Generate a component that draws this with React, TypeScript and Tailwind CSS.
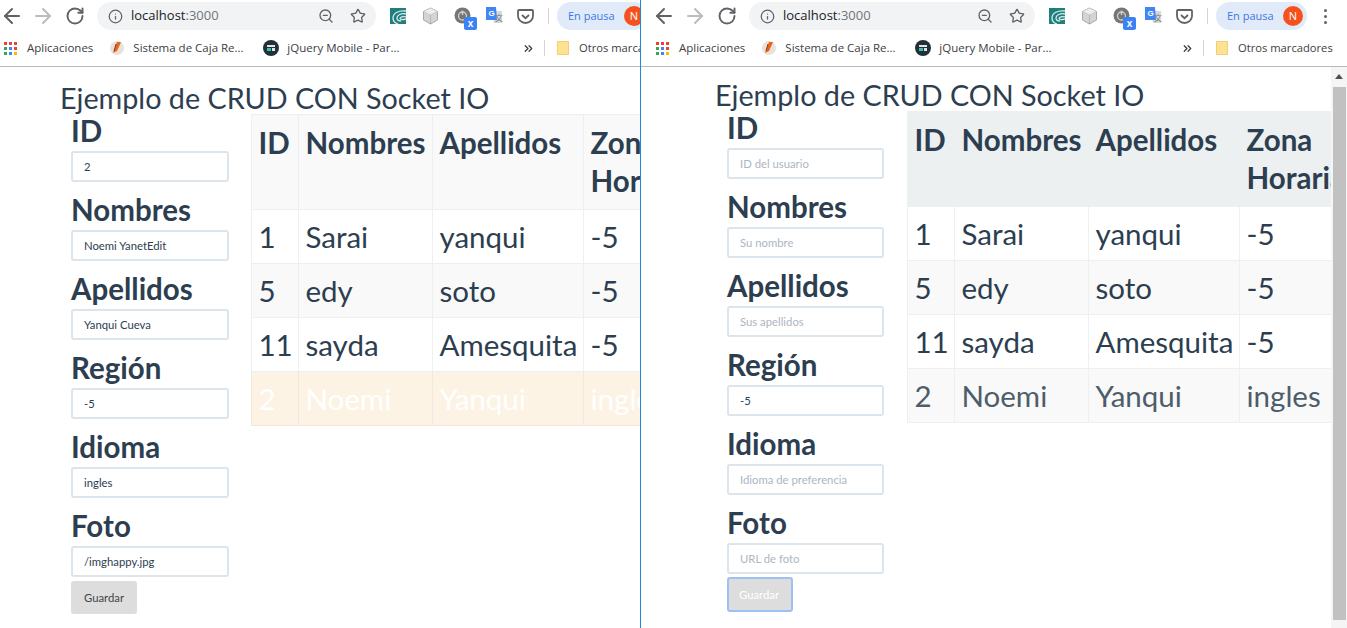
import { ArrowLeft, ArrowRight, ChevronsRight, Info, RotateCw, Star, ZoomOut } from "lucide-react";

const rows = [
  ["1", "Sarai", "yanqui", "-5"],
  ["5", "edy", "soto", "-5"],
  ["11", "sayda", "Amesquita", "-5"],
  ["2", "Noemi", "Yanqui", "ingles"],
];

const fields = [
  { label: "ID", value: "2", placeholder: "ID del usuario" },
  { label: "Nombres", value: "Noemi YanetEdit", placeholder: "Su nombre" },
  { label: "Apellidos", value: "Yanqui Cueva", placeholder: "Sus apellidos" },
  { label: "Región", value: "-5", placeholder: "-5" },
  { label: "Idioma", value: "ingles", placeholder: "Idioma de preferencia" },
  { label: "Foto", value: "/imghappy.jpg", placeholder: "URL de foto" },
];

function AppsGrid() {
  const colors = ["#ea4335", "#ea4335", "#ea4335", "#34a853", "#4285f4", "#ea4335", "#34a853", "#4285f4", "#fbbc05"];
  return (
    <div className="grid w-[13px] shrink-0 grid-cols-3 gap-[2px]">
      {colors.map((c, i) => (
        <svg key={i} width="3" height="3" className="block">
          <rect width="3" height="3" fill={c} />
        </svg>
      ))}
    </div>
  );
}

function Extensions() {
  return (
    <div className="flex shrink-0 items-center">
      {/* swirl */}
      <svg width="16" height="16" viewBox="0 0 16 16" className="ml-[14px]">
        <rect width="16" height="16" fill="#1f7f7c" />
        <path d="M16 3C9 2 3 5 3 10c0 3 2 5 5 6M16 6c-5-1-9 1-9 4 0 2 2 3 4 3M16 9c-3-1-6 0-6 1.500 0 1 2 1.500 6 .5" stroke="#d6ecec" strokeWidth="1.300" fill="none" />
      </svg>
      {/* cube */}
      <svg width="17" height="18" viewBox="0 0 17 18" className="ml-[16px]">
        <path d="M8.500 1 15.500 4.500V13L8.500 17 1.500 13V4.500Z" fill="#d4d4d4" stroke="#a8a8a8" />
        <path d="M1.500 4.500 8.500 8 15.500 4.500 8.500 1Z" fill="#ededed" stroke="#bdbdbd" strokeWidth="0.600" />
        <path d="M8.500 8V17" stroke="#b5b5b5" />
      </svg>
      {/* power badge */}
      <div className="relative ml-[15px] h-[18px] w-[18px]">
        <svg width="17" height="17" viewBox="0 0 17 17">
          <circle cx="8.500" cy="8.500" r="8" fill="#757575" />
          <circle cx="8.500" cy="9" r="4" fill="none" stroke="#d0d0d0" strokeWidth="1.300" />
          <path d="M8.500 3.500V8" stroke="#d0d0d0" strokeWidth="1.500" />
        </svg>
        <div className="absolute left-[10px] top-[10px] flex h-[13px] w-[13px] items-center justify-center rounded-[2px] bg-[#3b82f6] font-['Liberation_Sans',sans-serif] text-[10px] leading-none font-bold text-white">
          x
        </div>
      </div>
      {/* translate */}
      <svg width="17" height="18" viewBox="0 0 17 18" className="ml-[14px]">
        <path d="M6 4H16V16H8Z" fill="#d8d8d8" />
        <text x="9" y="14" fontSize="8" fontFamily="Liberation Sans, Noto Sans CJK SC, sans-serif" fill="#777777">文</text>
        <path d="M0 0H10L11 13H0Z" fill="#4285f4" />
        <text x="2.500" y="9" fontSize="8" fontWeight="700" fontFamily="Liberation Sans, sans-serif" fill="#ffffff">G</text>
      </svg>
      {/* pocket */}
      <svg width="17" height="15" viewBox="0 0 17 15" className="ml-[14px]">
        <path d="M2 1H15A1 1 0 0 1 16 2V7A7.500 7 0 0 1 1 7V2A1 1 0 0 1 2 1Z" fill="none" stroke="#5f6368" strokeWidth="1.800" />
        <path d="M5 6 8.500 9.200 12 6" fill="none" stroke="#5f6368" strokeWidth="1.800" />
      </svg>
    </div>
  );
}

function Toolbar({ className }: { className: string }) {
  return (
    <div className={`h-[67px] shrink-0 border-b border-[#b9b9b9] bg-white font-['Open_Sans',sans-serif] ${className}`}>
      <div className="flex h-[32px] items-center text-[#5f6368]">
        <ArrowLeft className="h-[24px] w-[24px] shrink-0" strokeWidth={2} />
        <ArrowRight className="ml-[7px] h-[24px] w-[24px] shrink-0 text-[#bcbcbc]" strokeWidth={2} />
        <RotateCw className="ml-[10px] h-[20px] w-[20px] shrink-0" strokeWidth={2.300} />
        <div className="ml-[12px] flex h-[28px] min-w-0 flex-1 items-center rounded-full bg-[#f1f3f4] pr-[10px] pl-[11px]">
          <Info className="h-[15px] w-[15px] shrink-0" strokeWidth={2} />
          <span className="ml-[8px] flex-1 text-[13px] text-[#202124]">
            localhost<span className="text-[#70757a]">:3000</span>
          </span>
          <ZoomOut className="h-[16px] w-[16px] shrink-0" strokeWidth={2} />
          <Star className="ml-[16px] h-[16px] w-[16px] shrink-0" strokeWidth={2} />
        </div>
        <Extensions />
        <div className="mr-[8px] ml-[14px] h-[16px] w-px shrink-0 bg-[#d5d5d5]" />
        <div className="flex h-[28px] w-[91px] shrink-0 items-center rounded-full bg-[#e0eaf8] pl-[11px]">
          <span className="w-[48px] shrink-0 text-[11px] whitespace-nowrap text-[#3b78e7]">En pausa</span>
          <div className="ml-[8px] flex h-[20px] w-[20px] shrink-0 items-center justify-center rounded-full bg-[#f4511e] text-[11px] text-white">N</div>
        </div>
        <div className="mr-[20px] ml-[17px] flex w-[3px] shrink-0 flex-col gap-[3px]">
          <div className="h-[3px] w-[3px] rounded-full bg-[#5f6368]" />
          <div className="h-[3px] w-[3px] rounded-full bg-[#5f6368]" />
          <div className="h-[3px] w-[3px] rounded-full bg-[#5f6368]" />
        </div>
      </div>
      <div className="flex h-[32px] items-center text-[11.500px] text-[#3c4043]">
        <div className="ml-[4px]"><AppsGrid /></div>
        <span className="ml-[10px]">Aplicaciones</span>
        <svg width="16" height="16" viewBox="0 0 16 16" className="ml-[16px] shrink-0">
          <circle cx="8" cy="8" r="7" fill="#e8e2da" />
          <path d="M4 13 8 2h4L8 11Z" fill="#e8641b" />
          <path d="M7 4 5 11" stroke="#8a3b10" />
        </svg>
        <span className="ml-[8px] w-[108px] shrink-0 whitespace-nowrap">Sistema de Caja Re...</span>
        <svg width="16" height="16" viewBox="0 0 16 16" className="ml-[22px] shrink-0">
          <circle cx="8" cy="8" r="8" fill="#22303a" />
          <rect x="4" y="5" width="8" height="2" fill="#dfe6e6" />
          <rect x="4" y="8" width="4" height="3" fill="#37c2a8" />
          <rect x="9" y="8" width="3" height="3" fill="#dfe6e6" />
        </svg>
        <span className="ml-[8px] w-[112px] shrink-0 whitespace-nowrap">jQuery Mobile - Par...</span>
        <div className="flex-1" />
        <ChevronsRight className="h-[13px] w-[13px] shrink-0" strokeWidth={2.400} />
        <div className="mr-[12px] ml-[9px] h-[16px] w-px shrink-0 bg-[#d5d5d5]" />
        <svg width="12" height="14" viewBox="0 0 12 14" className="shrink-0">
          <path d="M.5.500H11.500V13.500H.5Z" fill="#fde293" stroke="#f2cf6b" />
        </svg>
        <span className="ml-[10px] w-[109px] shrink-0 text-[11.200px] whitespace-nowrap">Otros marcadores</span>
      </div>
    </div>
  );
}

function Pane({ editing }: { editing: boolean }) {
  const cell = "border border-[#ecf0f1] px-[6.500px] align-top";
  return (
    <div className={`min-w-0 flex-1 overflow-hidden font-['Lato',sans-serif] text-[#2c3e50] ${editing ? "pt-[18px]" : "pt-[15px]"}`}>
      <h1 className={`text-[28.750px] leading-[26px] font-normal whitespace-nowrap ${editing ? "pl-[60px]" : "pl-[74px]"}`}>
        Ejemplo de CRUD CON Socket IO
      </h1>
      <div className={`flex ${editing ? "pl-[71px]" : "pl-[86px]"}`}>
        <form className={`flex shrink-0 flex-col gap-[8px] ${editing ? "w-[158px]" : "w-[157px]"}`}>
          {fields.map((f) => (
            <div key={f.label}>
              <div className="h-[40px] text-[29.500px] leading-[40px] font-bold whitespace-nowrap">{f.label}</div>
              <input
                readOnly
                value={editing ? f.value : f.label === "Región" ? "-5" : ""}
                placeholder={f.placeholder}
                className="block h-[31px] w-full rounded-[3px] border-2 border-[#dce4ec] bg-white px-[11px] pb-[1px] text-[11.300px] text-[#2c3e50] outline-none placeholder:text-[#acb6c0]"
              />
            </div>
          ))}
          {editing ? (
            <button type="button" className="-mt-[4px] h-[33px] w-[66px] rounded-[3px] bg-[#dddddd] pt-[1px] text-[11.300px] text-[#444444]">
              Guardar
            </button>
          ) : (
            <button type="button" className="-mt-[5px] h-[35px] w-[66px] rounded-[3px] border-2 border-[#9fbff5] bg-[#dddddd] pt-[1px] pr-[2px] text-[11.300px] text-white">
              Guardar
            </button>
          )}
        </form>
        <div className={`mt-[3px] min-w-0 flex-1 overflow-hidden ${editing ? "ml-[22px]" : "ml-[23px]"}`}>
          <table className="w-[483px] table-fixed border-collapse text-[29.500px]">
            <colgroup>
              <col className="w-[47px]" />
              <col className="w-[134px]" />
              <col className="w-[151px]" />
              <col className="w-[151px]" />
            </colgroup>
            <thead>
              <tr className={editing ? "bg-[#f9f9f9]" : "bg-[#ecf0f1]"}>
                {["ID", "Nombres", "Apellidos", "Zona Horaria"].map((h) => (
                  <th key={h} className={`${cell} h-[95px] py-[9px] text-left leading-[38px] font-bold`}>{h}</th>
                ))}
              </tr>
            </thead>
            <tbody>
              {rows.map((r, i) => {
                const warn = editing && i === 3;
                const stripe = i % 2 === 1;
                return (
                  <tr key={r[0]} className={warn ? "bg-[#fcf3e5] text-white" : stripe ? "bg-[#f9f9f9]" : "bg-white"}>
                    {r.map((v, j) => (
                      <td key={j} className={`${cell} py-[8px] leading-[37px] whitespace-nowrap ${warn ? "border-[#efe9de]" : ""} ${!editing && i === 3 ? "text-[#4d5d6c]" : ""}`}>{v}</td>
                    ))}
                  </tr>
                );
              })}
            </tbody>
          </table>
        </div>
      </div>
    </div>
  );
}

export default function App() {
  return (
    <div className="flex h-[628px] w-[1347px] overflow-hidden bg-white">
      <div className="flex w-[641px] shrink-0 flex-col overflow-hidden border-r border-[#1e88e5]">
        <Toolbar className="w-[688px]" />
        <Pane editing />
      </div>
      <div className="flex min-w-0 flex-1 flex-col overflow-hidden">
        <Toolbar className="w-full pl-[11px]" />
        <div className="flex min-h-0 flex-1">
          <Pane editing={false} />
          <div className="flex w-4 shrink-0 flex-col items-center bg-[#f5f5f5]">
            <div className="mt-[7px] h-0 w-0 border-x-[4px] border-b-[5px] border-x-transparent border-b-[#505050]" />
            <div className="mt-[8px] h-[533px] w-[13px] bg-[#c1c1c1]" />
          </div>
        </div>
      </div>
    </div>
  );
}
